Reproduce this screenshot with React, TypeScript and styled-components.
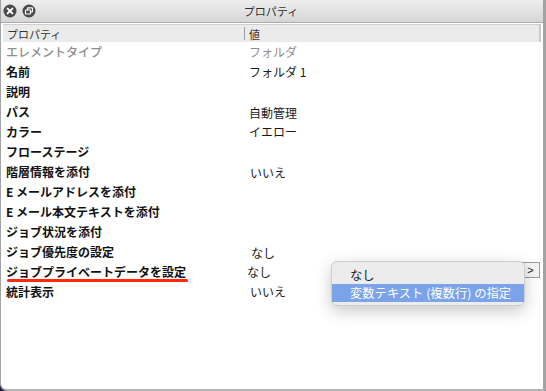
import styled, { createGlobalStyle } from "styled-components";

const GlobalStyle = createGlobalStyle`
  html, body {
    margin: 0;
    padding: 0;
    background: #1d1d44;
  }
  body {
    font-family: "Noto Sans CJK JP", "Noto Sans", sans-serif;
  }
`;

const Window = styled.div`
  width: 546px;
  height: 391px;
  box-sizing: border-box;
  background: #ffffff;
  border-left: 1px solid #a3a3a3;
  border-right: 3px solid #a3a3a3;
  border-bottom: 2px solid #b4b4b4;
  border-bottom-left-radius: 7px;
  display: flex;
  flex-direction: column;
  overflow: hidden;
`;

const TitleBar = styled.div`
  height: 22px;
  flex: none;
  display: grid;
  grid-template-columns: 60px 1fr 60px;
  align-items: center;
  background: linear-gradient(#eeeeee, #d6d6d6);
  border-bottom: 1px solid #a9a9a9;
`;

const Buttons = styled.div`
  display: flex;
  gap: 5px;
  padding-left: 2px;
`;

const RoundBtn = styled.svg`
  width: 14px;
  height: 14px;
  display: block;
`;

const Title = styled.div`
  text-align: center;
  font-size: 11px;
  color: #2e2e2e;
  margin-left: -2px;
`;

const Header = styled.div`
  margin: 1px 2px 0 2px;
  height: 17px;
  display: flex;
  align-items: center;
  background: #ebebeb;
  border-top: 1px solid #cfcfcf;
  border-right: 2px solid #c9c9c9;
  font-size: 11px;
  color: #333;
`;

const HeadCell = styled.div<{ $w?: number }>`
  width: ${(p) => (p.$w ? `${p.$w}px` : "auto")};
  flex: ${(p) => (p.$w ? "none" : "1")};
  padding-left: 4px;
  box-sizing: border-box;
`;

const HeadSep = styled.div`
  width: 1px;
  height: 13px;
  background: #9c9c9c;
`;

const Rows = styled.div`
  display: flex;
  flex-direction: column;
`;

const Row = styled.div`
  position: relative;
  height: 20px;
  display: flex;
  align-items: center;
  font-size: 12px;
  line-height: 20px;
`;

const Label = styled.div<{ $muted?: boolean }>`
  width: 244px;
  flex: none;
  padding-left: 5px;
  box-sizing: border-box;
  font-weight: ${(p) => (p.$muted ? 500 : 700)};
  color: ${(p) => (p.$muted ? "#8d8d8d" : "#111111")};
  white-space: nowrap;
`;

const Marked = styled.span`
  position: relative;
  &::after {
    content: "";
    position: absolute;
    left: 1px;
    right: -2px;
    bottom: -2px;
    height: 3px;
    border-radius: 2px;
    background: #ff2a0a;
  }
`;

const Value = styled.div<{ $muted?: boolean; $dx: number; $dy: number }>`
  flex: 1;
  display: flex;
  align-items: center;
  justify-content: space-between;
  padding-left: ${(p) => 4 + p.$dx}px;
  padding-right: 3px;
  color: ${(p) => (p.$muted ? "#8d8d8d" : "#1a1a1a")};
  transform: translateY(${(p) => p.$dy}px);
`;

const MoreBtn = styled.div`
  width: 19px;
  height: 16px;
  box-sizing: border-box;
  border: 1px solid #9b9b9b;
  background: #f4f4f4;
  font-family: "Liberation Sans", sans-serif;
  font-size: 11px;
  line-height: 14px;
  text-align: center;
  color: #222;
  margin-top: -4px;
`;

const Popup = styled.div`
  position: absolute;
  left: 330px;
  top: -1px;
  width: 194px;
  height: 45px;
  box-sizing: border-box;
  padding-top: 4px;
  border-radius: 6px;
  background: #ececec;
  border: 1px solid #cdcdcd;
  box-shadow: 0 5px 16px rgba(0, 0, 0, 0.22);
  z-index: 2;
`;

const PopItem = styled.div<{ $active?: boolean }>`
  height: 18px;
  line-height: 18px;
  padding-left: 18px;
  font-size: 12.3px;
  color: ${(p) => (p.$active ? "#ffffff" : "#1a1a1a")};
  background: ${(p) => (p.$active ? "#7aa3ea" : "transparent")};
`;

type Item = {
  label: string;
  value?: string;
  muted?: boolean;
  marked?: boolean;
  dx?: number;
  dy?: number;
};

const items: Item[] = [
  { label: "エレメントタイプ", value: "フォルダ", muted: true },
  { label: "名前", value: "フォルダ 1" },
  { label: "説明" },
  { label: "パス", value: "自動管理", dy: 1 },
  { label: "カラー", value: "イエロー" },
  { label: "フローステージ" },
  { label: "階層情報を添付", value: "いいえ", dx: 1, dy: 1 },
  { label: "E メールアドレスを添付" },
  { label: "E メール本文テキストを添付" },
  { label: "ジョブ状況を添付" },
  { label: "ジョブ優先度の設定", value: "なし", dx: 2, dy: 1 },
  { label: "ジョブプライベートデータを設定", value: "なし", marked: true, dx: -2 },
  { label: "統計表示", value: "いいえ", dx: 1 },
];

const App = () => {
  return (
    <>
      <GlobalStyle />
      <Window>
        <TitleBar>
          <Buttons>
            <RoundBtn viewBox="0 0 14 14">
              <circle cx="7" cy="7" r="6.5" fill="#4a4a4a" />
              <path d="M4.6 4.6 9.4 9.4M9.4 4.6 4.6 9.4" stroke="#fff" strokeWidth="2" strokeLinecap="round" />
            </RoundBtn>
            <RoundBtn viewBox="0 0 14 14">
              <circle cx="7" cy="7" r="6.5" fill="#4a4a4a" />
              <rect x="5.5" y="3.8" width="5" height="4" rx="0.6" fill="none" stroke="#fff" strokeWidth="1.2" />
              <rect x="3.5" y="6" width="5" height="4" rx="0.6" fill="#4a4a4a" stroke="#fff" strokeWidth="1.2" />
            </RoundBtn>
          </Buttons>
          <Title>プロパティ</Title>
          <div />
        </TitleBar>
        <Header>
          <HeadCell $w={241}>プロパティ</HeadCell>
          <HeadSep />
          <HeadCell>値</HeadCell>
        </Header>
        <Rows>
          {items.map((it) => (
            <Row key={it.label}>
              <Label $muted={it.muted}>
                {it.marked ? <Marked>{it.label}</Marked> : it.label}
              </Label>
              <Value $muted={it.muted} $dx={it.dx ?? 0} $dy={it.dy ?? 0}>
                <span>{it.value}</span>
                {it.marked && <MoreBtn>&gt;</MoreBtn>}
              </Value>
              {it.marked && (
                <Popup>
                  <PopItem>なし</PopItem>
                  <PopItem $active>変数テキスト (複数行) の指定</PopItem>
                </Popup>
              )}
            </Row>
          ))}
        </Rows>
      </Window>
    </>
  );
};

export default App;
